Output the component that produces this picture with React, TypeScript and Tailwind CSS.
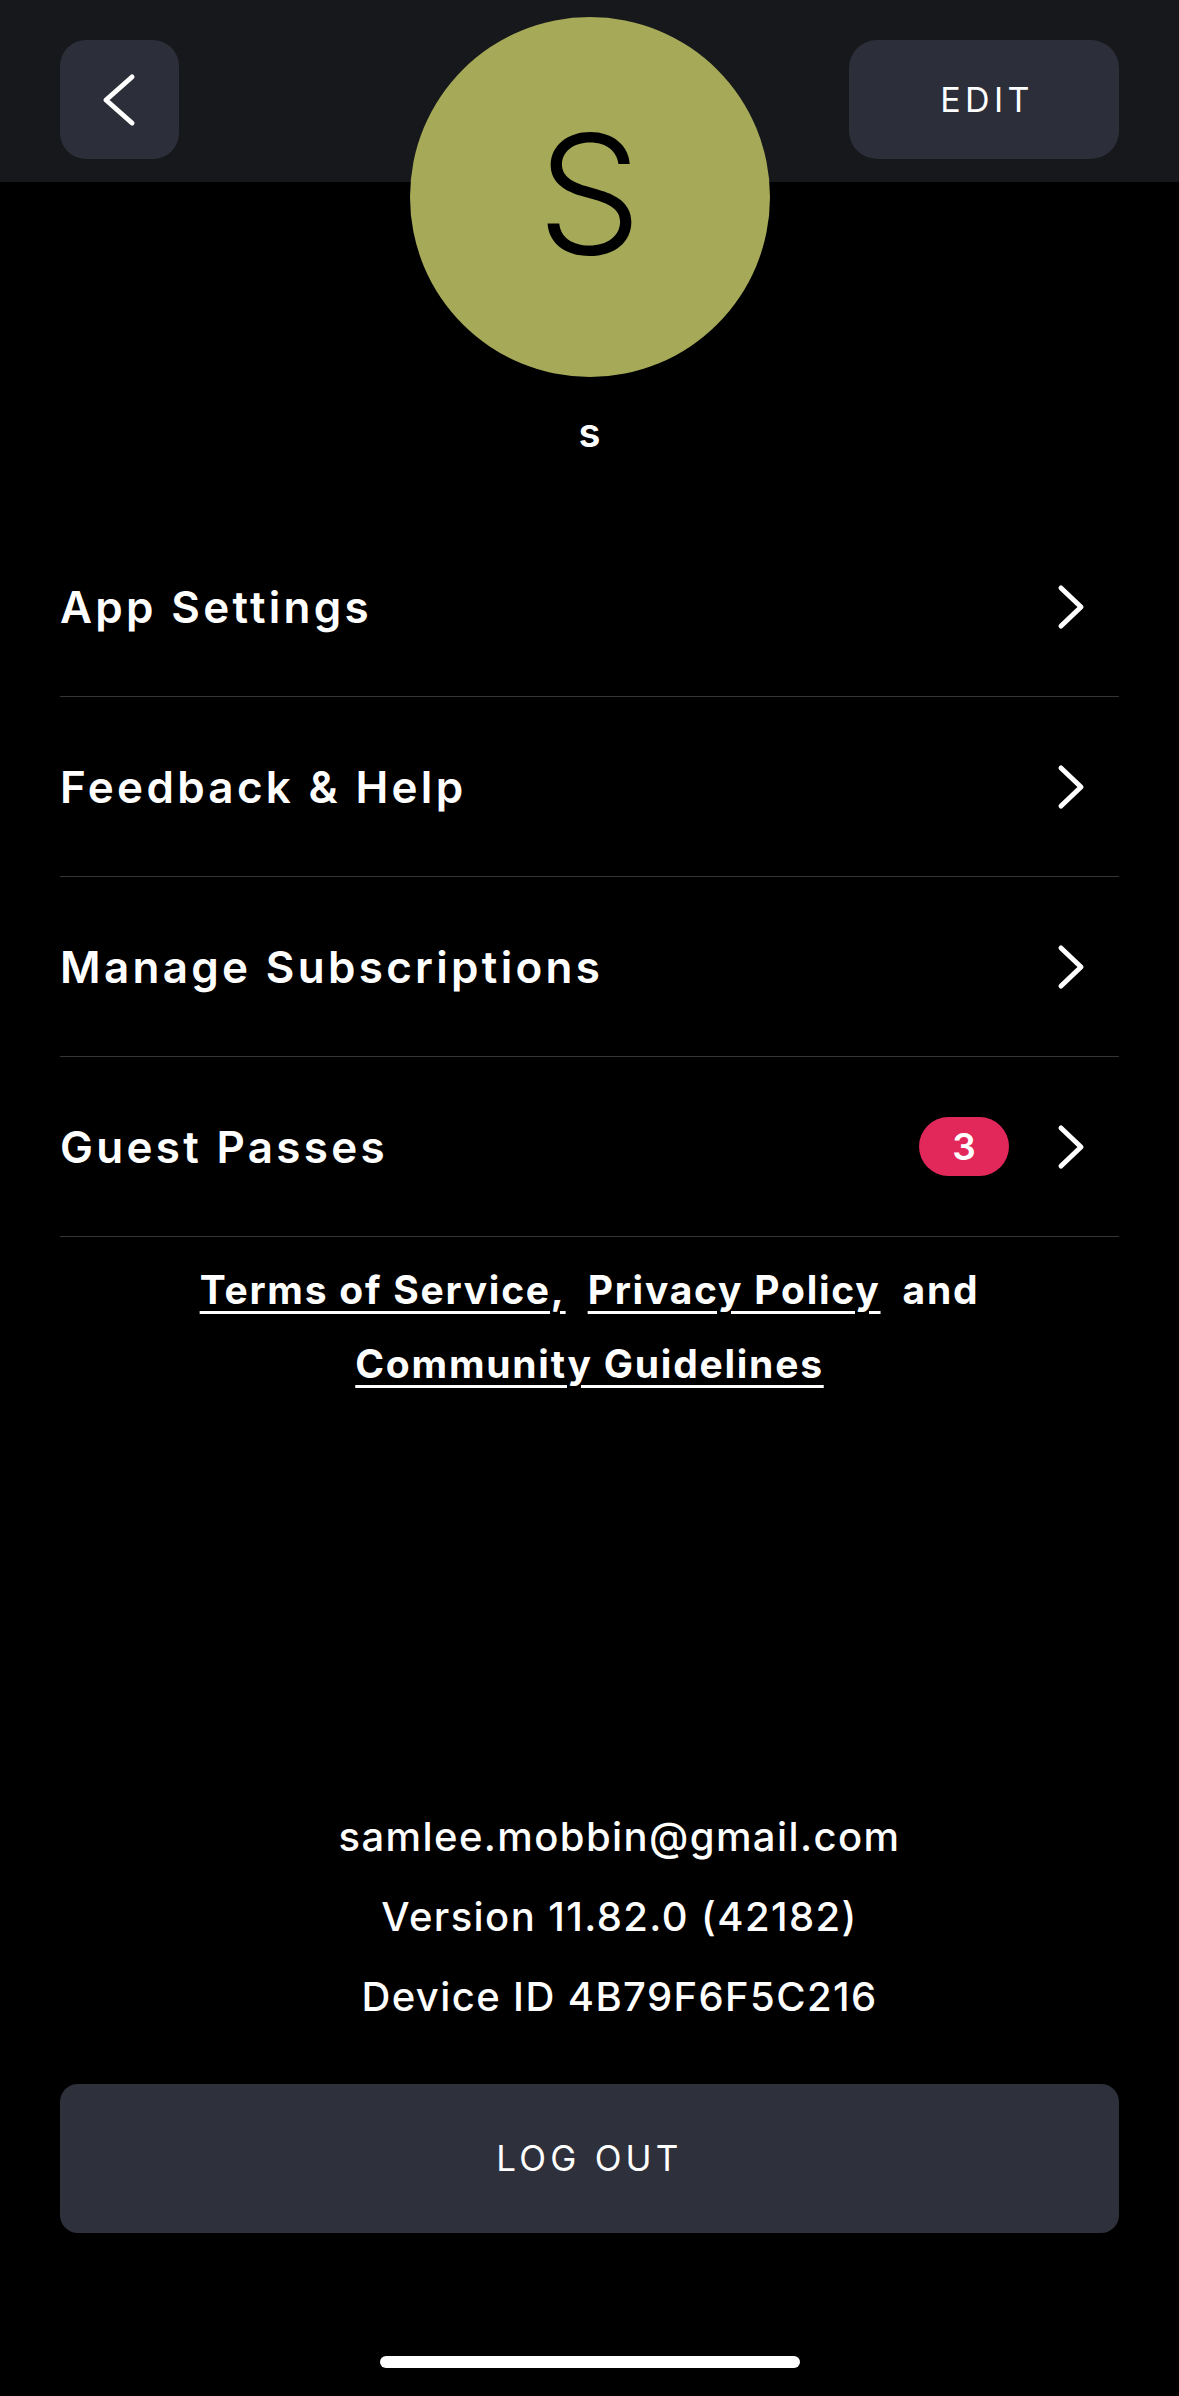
import React from "react";

function Chevron() {
  return (
    <svg width="28" height="46" viewBox="0 0 28 46" fill="none">
      <polyline points="4,4 24,23 4,42" stroke="white" strokeWidth="5" strokeLinecap="round" strokeLinejoin="round" />
    </svg>
  );
}

function Row({ label, badge }: { label: string; badge?: string }) {
  return (
    <div className="h-[180px] border-b border-[#363636] flex items-center">
      <span className="flex-1 text-[44px] font-semibold tracking-[0.075em]">{label}</span>
      {badge && (
        <span className="w-[90px] h-[59px] rounded-full bg-[#e2285a] flex items-center justify-center text-[37px] font-semibold mr-[48px]">
          {badge}
        </span>
      )}
      <span className="mr-[34px] flex items-center">
        <Chevron />
      </span>
    </div>
  );
}

export default function App() {
  return (
    <div className="w-[1179px] h-[2396px] bg-black flex flex-col text-white overflow-hidden font-['Inter',sans-serif]">
      <div className="h-[182px] shrink-0 bg-[#16181c] flex justify-between items-start px-[60px] pt-[40px]">
        <div className="w-[119px] h-[119px] rounded-[26px] bg-[#2c2e39] flex items-center justify-center">
          <svg width="119" height="119" viewBox="0 0 119 119" fill="none">
            <polyline points="72,37 46,60 72,83" stroke="white" strokeWidth="5" strokeLinecap="round" strokeLinejoin="round" />
          </svg>
        </div>
        <div className="w-[270px] h-[119px] rounded-[28px] bg-[#2c2e39] flex items-center justify-center text-[34px] font-normal tracking-[0.13em] pl-[6px]">
          EDIT
        </div>
      </div>

      <div className="relative z-10 -mt-[165px] flex flex-col items-center">
        <div className="w-[360px] h-[360px] rounded-full bg-[#a6aa58] flex items-center justify-center text-black text-[166px] font-light leading-none pb-[6px]">
          S
        </div>
        <div className="mt-[32px] mb-[3px] text-[40px] font-semibold leading-[48px]">s</div>
      </div>

      <div className="mt-[57px] px-[60px] flex flex-col">
        <Row label="App Settings" />
        <Row label="Feedback & Help" />
        <Row label="Manage Subscriptions" />
        <Row label="Guest Passes" badge="3" />
      </div>

      <div className="pt-[16px] text-center text-[39px] font-bold leading-[74px] tracking-[0.045em]">
        <div>
          <span className="underline decoration-[3px] underline-offset-[7px]">Terms of Service,</span>
          <span className="inline-block w-[22px]"></span>
          <span className="underline decoration-[3px] underline-offset-[7px]">Privacy Policy</span>
          <span className="inline-block w-[22px]"></span>
          <span>and</span>
        </div>
        <div>
          <span className="underline decoration-[3px] underline-offset-[7px]">Community Guidelines</span>
        </div>
      </div>

      <div className="flex-1"></div>

      <div className="pl-[60px] flex flex-col items-center text-[40px] font-medium leading-[80px] tracking-[0.035em]">
        <div>samlee.mobbin@gmail.com</div>
        <div>Version 11.82.0 (42182)</div>
        <div>Device ID 4B79F6F5C216</div>
      </div>

      <div className="mt-[47px] mx-[60px] h-[149px] rounded-[18px] bg-[#2e303b] flex items-center justify-center text-[35px] font-normal tracking-[0.12em]">
        LOG OUT
      </div>

      <div className="mt-[123px] mb-[28px] w-[420px] h-[12px] rounded-full bg-white self-center"></div>
    </div>
  );
}
